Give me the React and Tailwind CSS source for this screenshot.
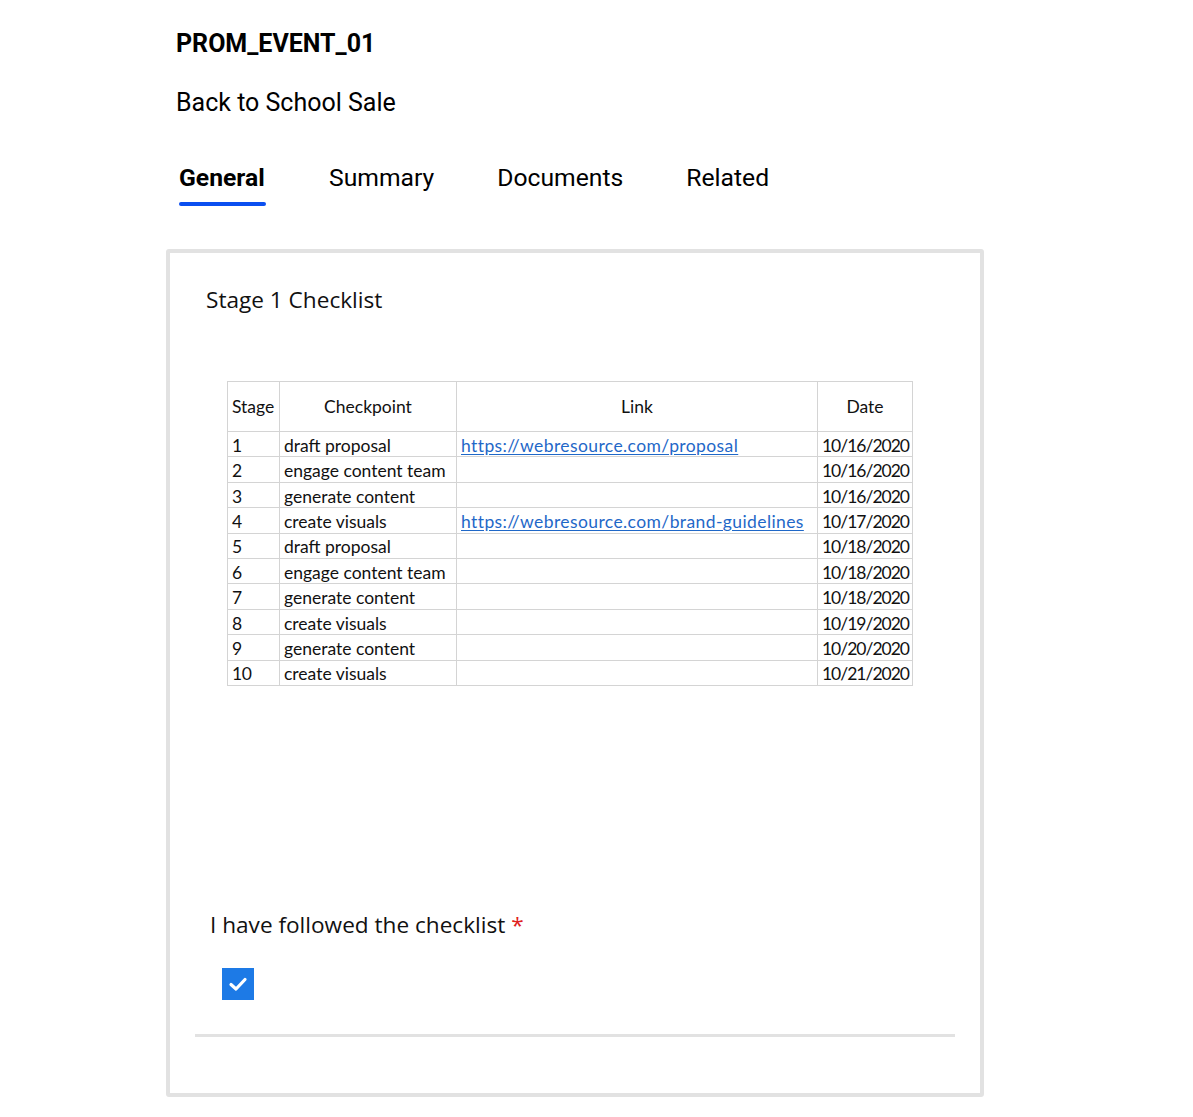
import React from "react";

const rows = [
  ["1", "draft proposal", "https://webresource.com/proposal", "10/16/2020"],
  ["2", "engage content team", "", "10/16/2020"],
  ["3", "generate content", "", "10/16/2020"],
  ["4", "create visuals", "https://webresource.com/brand-guidelines", "10/17/2020"],
  ["5", "draft proposal", "", "10/18/2020"],
  ["6", "engage content team", "", "10/18/2020"],
  ["7", "generate content", "", "10/18/2020"],
  ["8", "create visuals", "", "10/19/2020"],
  ["9", "generate content", "", "10/20/2020"],
  ["10", "create visuals", "", "10/21/2020"],
];

export default function App() {
  return (
    <div className="bg-white w-[1193px] min-h-[1117px] text-black">
      <div className="pl-[176px] pt-[28px] font-['Roboto',sans-serif]">
        <div className="text-[25px] leading-[32px] font-bold">PROM_EVENT_01</div>
        <div className="text-[25px] leading-[32px] mt-[27px]">Back to School Sale</div>
        <div className="flex gap-[63px] mt-[43px] pl-[3px] text-[24.7px] leading-[32px]">
          <div className="flex flex-col">
            <span className="font-bold">General</span>
            <div className="h-[4px] mt-[8px] w-[87px] rounded-full bg-[#0a4ff0]" />
          </div>
          <span>Summary</span>
          <span>Documents</span>
          <span>Related</span>
        </div>
      </div>

      <div className="ml-[166px] mt-[43px] w-[818px] h-[848px] border-4 border-[#e2e2e2] rounded-[3px] flex flex-col">
        <div className="pl-[36px] pt-[31px] text-[22.6px] leading-[32px] font-['Open_Sans',sans-serif] text-[#111]">
          Stage 1 Checklist
        </div>
        <div className="ml-[57px] mt-[65px]">
          <table className="border-collapse font-['Lato',sans-serif] text-[17.5px] text-[#111] leading-none">
            <colgroup>
              <col className="w-[52px]" />
              <col className="w-[177px]" />
              <col className="w-[361px]" />
              <col className="w-[95px]" />
            </colgroup>
            <thead>
              <tr className="h-[50px]">
                <th className="border border-[#d4d4d4] font-normal text-left pl-[4px]">Stage</th>
                <th className="border border-[#d4d4d4] font-normal text-center">Checkpoint</th>
                <th className="border border-[#d4d4d4] font-normal text-center">Link</th>
                <th className="border border-[#d4d4d4] font-normal text-center">Date</th>
              </tr>
            </thead>
            <tbody>
              {rows.map((r) => (
                <tr key={r[0]} className="h-[25.4px]">
                  <td className="border border-[#d4d4d4] pl-[4px] align-bottom pb-[2px] tracking-[-0.5px]">{r[0]}</td>
                  <td className="border border-[#d4d4d4] pl-[4px] align-bottom pb-[2px] whitespace-nowrap">{r[1]}</td>
                  <td className="border border-[#d4d4d4] pl-[4px] align-bottom pb-[2px] whitespace-nowrap">
                    {r[2] && (
                      <span className="text-[#1f68c8] underline underline-offset-[2px] tracking-[0.4px]">{r[2]}</span>
                    )}
                  </td>
                  <td className="border border-[#d4d4d4] pr-[3px] text-right align-bottom pb-[2px] tracking-[-1px] whitespace-nowrap">
                    {r[3]}
                  </td>
                </tr>
              ))}
            </tbody>
          </table>
        </div>
        <div className="pl-[40px] mt-[223px] text-[22.6px] leading-[32px] font-['Open_Sans',sans-serif] text-[#111]">
          I have followed the checklist <span className="text-[#e02020]">*</span>
        </div>
        <div className="ml-[52px] mt-[27px] w-[32px] h-[32px] bg-[#1d7ae6] flex items-center justify-center">
          <svg width="24" height="24" viewBox="0 0 24 24" fill="none">
            <path d="M5 12.5 L10 17 L19 7.5" stroke="white" strokeWidth="3.2" strokeLinecap="round" strokeLinejoin="round" />
          </svg>
        </div>
        <div className="mx-[25px] mt-[34px] h-[3px] bg-[#e2e2e2]" />
      </div>
    </div>
  );
}
